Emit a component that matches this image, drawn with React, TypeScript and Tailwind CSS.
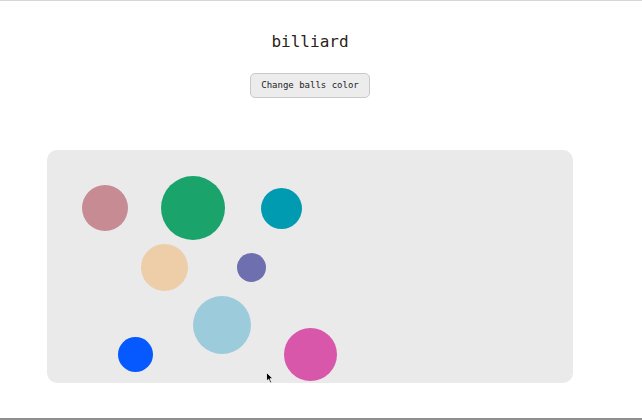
import React from "react";

interface Ball {
  x: number;
  y: number;
  r: number;
  color: string;
}

// positions relative to the table's top-left corner
const balls: Ball[] = [
  { x: 58, y: 58, r: 23, color: "#c68b93" },
  { x: 146, y: 58, r: 32, color: "#1aa36b" },
  { x: 234, y: 58, r: 20.5, color: "#009bb1" },
  { x: 117, y: 117, r: 23.5, color: "#edcea8" },
  { x: 204, y: 117, r: 14.5, color: "#6e6fae" },
  { x: 175, y: 175, r: 29, color: "#9ccbdc" },
  { x: 88, y: 204, r: 17.5, color: "#0559fe" },
  { x: 263, y: 204, r: 26.5, color: "#d957ab" },
];

export default function App() {
  return (
    <div className="h-[420px] w-[642px] bg-white border-t border-t-[#d6d6d6] border-b-2 border-b-[#8f8f8f] overflow-hidden" style={{ fontFamily: '"DejaVu Sans Mono", "Liberation Mono", monospace' }}>
      <div className="w-[620px] flex flex-col items-center">
        <h1 className="mt-[29px] text-[16px] leading-[24px] text-[#2b2319]">billiard</h1>
        <button className="mt-[19px] h-[25px] w-[120px] rounded-[5px] border border-[#c9c9c9] bg-[#ececec] text-[9px] text-[#222]">
          Change balls color
        </button>
        <div className="relative mt-[52px] h-[233px] w-[526px] rounded-[10px] bg-[#eaeaeb]">
          {balls.map((b, i) => (
            <div
              key={i}
              className="absolute rounded-full"
              style={{ left: b.x - b.r, top: b.y - b.r, width: b.r * 2, height: b.r * 2, background: b.color }}
            />
          ))}
          {/* mouse pointer */}
          <svg className="absolute left-[219px] top-[222px]" width="8" height="12" viewBox="0 0 8 12">
            <path d="M0.5 0.5 L0.5 9 L2.6 7.2 L4.2 10.8 L5.6 10.2 L4 6.7 L7 6.7 Z" fill="#000" stroke="#fff" strokeWidth="0.8" />
          </svg>
        </div>
      </div>
    </div>
  );
}
